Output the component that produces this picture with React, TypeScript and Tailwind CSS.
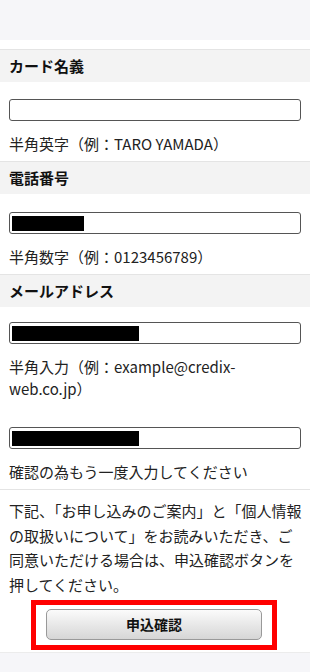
import React from "react";

const font = { fontFamily: '"Noto Sans CJK JP", "Noto Sans", sans-serif' };

function Header({ children }: { children: React.ReactNode }) {
  return (
    <div className="h-[33px] border-t border-[#e4e4e4] bg-[#f3f3f3] px-[9px] flex items-center text-[15px] font-bold text-[#111]">
      {children}
    </div>
  );
}

function Input({ bar }: { bar?: number }) {
  return (
    <div className="h-[22px] mx-[9px] border-[1.5px] border-[#555] rounded-[3px] bg-white flex items-center pl-[2px]">
      {bar ? <div className="h-[15px] bg-black" style={{ width: bar }} /> : null}
    </div>
  );
}

function Help({ children }: { children: React.ReactNode }) {
  return <p className="mt-[12px] px-[9px] text-[15px] leading-[22px] text-[#222]">{children}</p>;
}

export default function App() {
  return (
    <div className="w-[310px] h-[672px] bg-white flex flex-col overflow-hidden" style={font}>
      <div className="h-[40px] bg-[#f6f6f9] shrink-0" />
      <div className="h-[9px] shrink-0" />
      <Header>カード名義</Header>
      <div className="pt-[17px] pb-[6px]">
        <Input />
        <Help>半角英字（例：TARO YAMADA）</Help>
      </div>
      <Header>電話番号</Header>
      <div className="pt-[18px] pb-[6px]">
        <Input bar={72} />
        <Help>半角数字（例：0123456789）</Help>
      </div>
      <Header>メールアドレス</Header>
      <div className="pt-[15px] pb-[6px]">
        <Input bar={127} />
        <Help>
          半角入力（例：example@credix-
          <br />
          web.co.jp）
        </Help>
        <div className="h-[27px]" />
        <Input bar={127} />
        <Help>確認の為もう一度入力してください</Help>
      </div>
      <div className="border-t border-[#e4e4e4] pt-[9px] px-[9px] text-[15px] leading-[24.5px] text-[#222]">
        <div className="whitespace-nowrap">下記、「お申し込みのご案内」と「個人情報</div>
        <div className="whitespace-nowrap">の取扱いについて」をお読みいただき、ご</div>
        <div className="whitespace-nowrap">同意いただける場合は、申込確認ボタンを</div>
        <div className="whitespace-nowrap">押してください。</div>
      </div>
      <div className="mt-[3px] flex justify-center">
        <div className="ml-[-2px] w-[246px] h-[50px] border-[5px] border-[#ff0000] px-[10px] pt-[4px]">
          <button className="w-full h-[31px] rounded-[5px] border border-[#999] bg-gradient-to-b from-[#fbfbfb] to-[#d6d6d6] text-[14px] font-bold text-[#111]">
            申込確認
          </button>
        </div>
      </div>
      <div className="mt-[2px] flex-1 border-t border-[#ececec] bg-[#f6f6f9]" />
    </div>
  );
}
